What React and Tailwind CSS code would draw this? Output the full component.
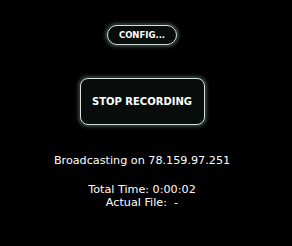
import React from "react";

export default function App() {
  return (
    <div className="w-[292px] h-[246px] bg-black overflow-hidden font-['DejaVu_Sans',Verdana,sans-serif]">
      <div className="w-[284px] flex flex-col items-center">
        <button className="mt-[25px] w-[70px] h-[20px] rounded-full border-[1.5px] border-[#d8e2dd] bg-[#080c0b] shadow-[0_0_0_2px_#27302c,0_0_3px_3px_#1a211e] text-white text-[8.5px] font-bold leading-none flex items-center justify-center">
          CONFIG...
        </button>
        <button className="mt-[33px] w-[125px] h-[47px] rounded-[8px] border-[1.5px] border-[#d8e2dd] bg-[#080c0b] shadow-[0_0_0_2px_#27302c,0_0_3px_3px_#1a211e] text-white text-[10px] font-bold leading-none flex items-center justify-center">
          STOP RECORDING
        </button>
        <div className="mt-[29px] text-white text-[11.2px] leading-[13px]">Broadcasting on 78.159.97.251</div>
        <div className="mt-[16px] text-white text-[11.2px] leading-[13px] text-center">
          <div>Total Time: 0:00:02</div>
          <div className="whitespace-pre">Actual File:  -</div>
        </div>
      </div>
    </div>
  );
}
